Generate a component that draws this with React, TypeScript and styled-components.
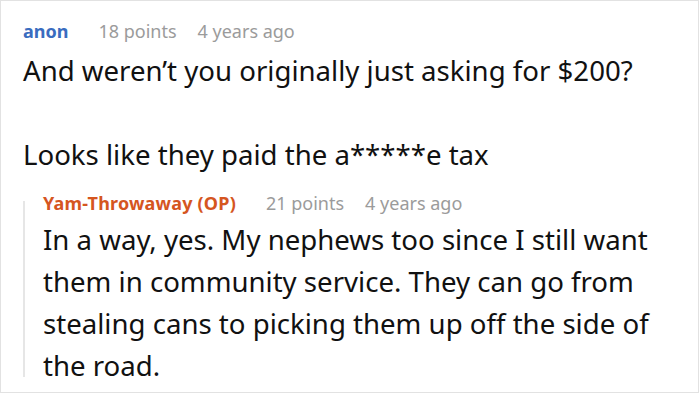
import React from 'react';
import styled, { createGlobalStyle } from 'styled-components';

const GlobalStyle = createGlobalStyle`
  html, body {
    margin: 0;
    padding: 0;
    background: #fff;
  }

  body {
    font-family: 'Noto Sans', 'Open Sans', Arial, sans-serif;
    color: #111;
  }
`;

const Frame = styled.div`
  box-sizing: border-box;
  width: 699px;
  height: 393px;
  border: 1px solid #e2e2e2;
  padding: 18px 22px 0 22px;
  overflow: hidden;
`;

const Meta = styled.div<{ gap?: number }>`
  display: flex;
  align-items: baseline;
  height: 24px;
  line-height: 24px;
  font-size: 18px;
  margin-bottom: ${p => p.gap ?? 6}px;
  white-space: nowrap;
`;

const Author = styled.span<{ op?: boolean }>`
  font-weight: 700;
  color: ${p => (p.op ? '#d5561f' : '#3a6cbf')};
  margin-right: 30px;
  letter-spacing: ${p => (p.op ? '0.2px' : '0')};
`;

const Info = styled.span`
  color: #9b9b9b;
  margin-right: 21px;
`;

const Body = styled.div`
  font-size: 27.6px;
  line-height: 42px;

  p {
    margin: 0 0 42px;
  }

  p:last-child {
    margin-bottom: 0;
  }
`;

const Reply = styled.div`
  position: relative;
  margin-top: 16px;
  padding-left: 20px;

  &::before {
    content: '';
    position: absolute;
    left: 0;
    top: 10px;
    bottom: 9px;
    width: 2px;
    background: #e6e6e6;
  }
`;

interface CommentProps {
  author: string;
  points: number;
  age: string;
  op?: boolean;
  gap?: number;
  children: React.ReactNode;
}

function Comment({ author, points, age, op, gap, children }: CommentProps) {
  return (
    <div>
      <Meta gap={gap}>
        <Author op={op}>{author}</Author>
        <Info>{points} points</Info>
        <Info>{age}</Info>
      </Meta>
      <Body>{children}</Body>
    </div>
  );
}

function App() {
  return (
    <>
      <GlobalStyle />
      <Frame>
        <Comment author="anon" points={18} age="4 years ago">
          <p>And weren’t you originally just asking for $200?</p>
          <p>Looks like they paid the a*****e tax</p>
        </Comment>

        <Reply>
          <Comment author="Yam-Throwaway (OP)" points={21} age="4 years ago" op gap={3}>
            <p>
              In a way, yes. My nephews too since I still want them in
              community service. They can go from stealing cans to picking
              them up off the side of the road.
            </p>
          </Comment>
        </Reply>
      </Frame>
    </>
  );
}

export default App;
